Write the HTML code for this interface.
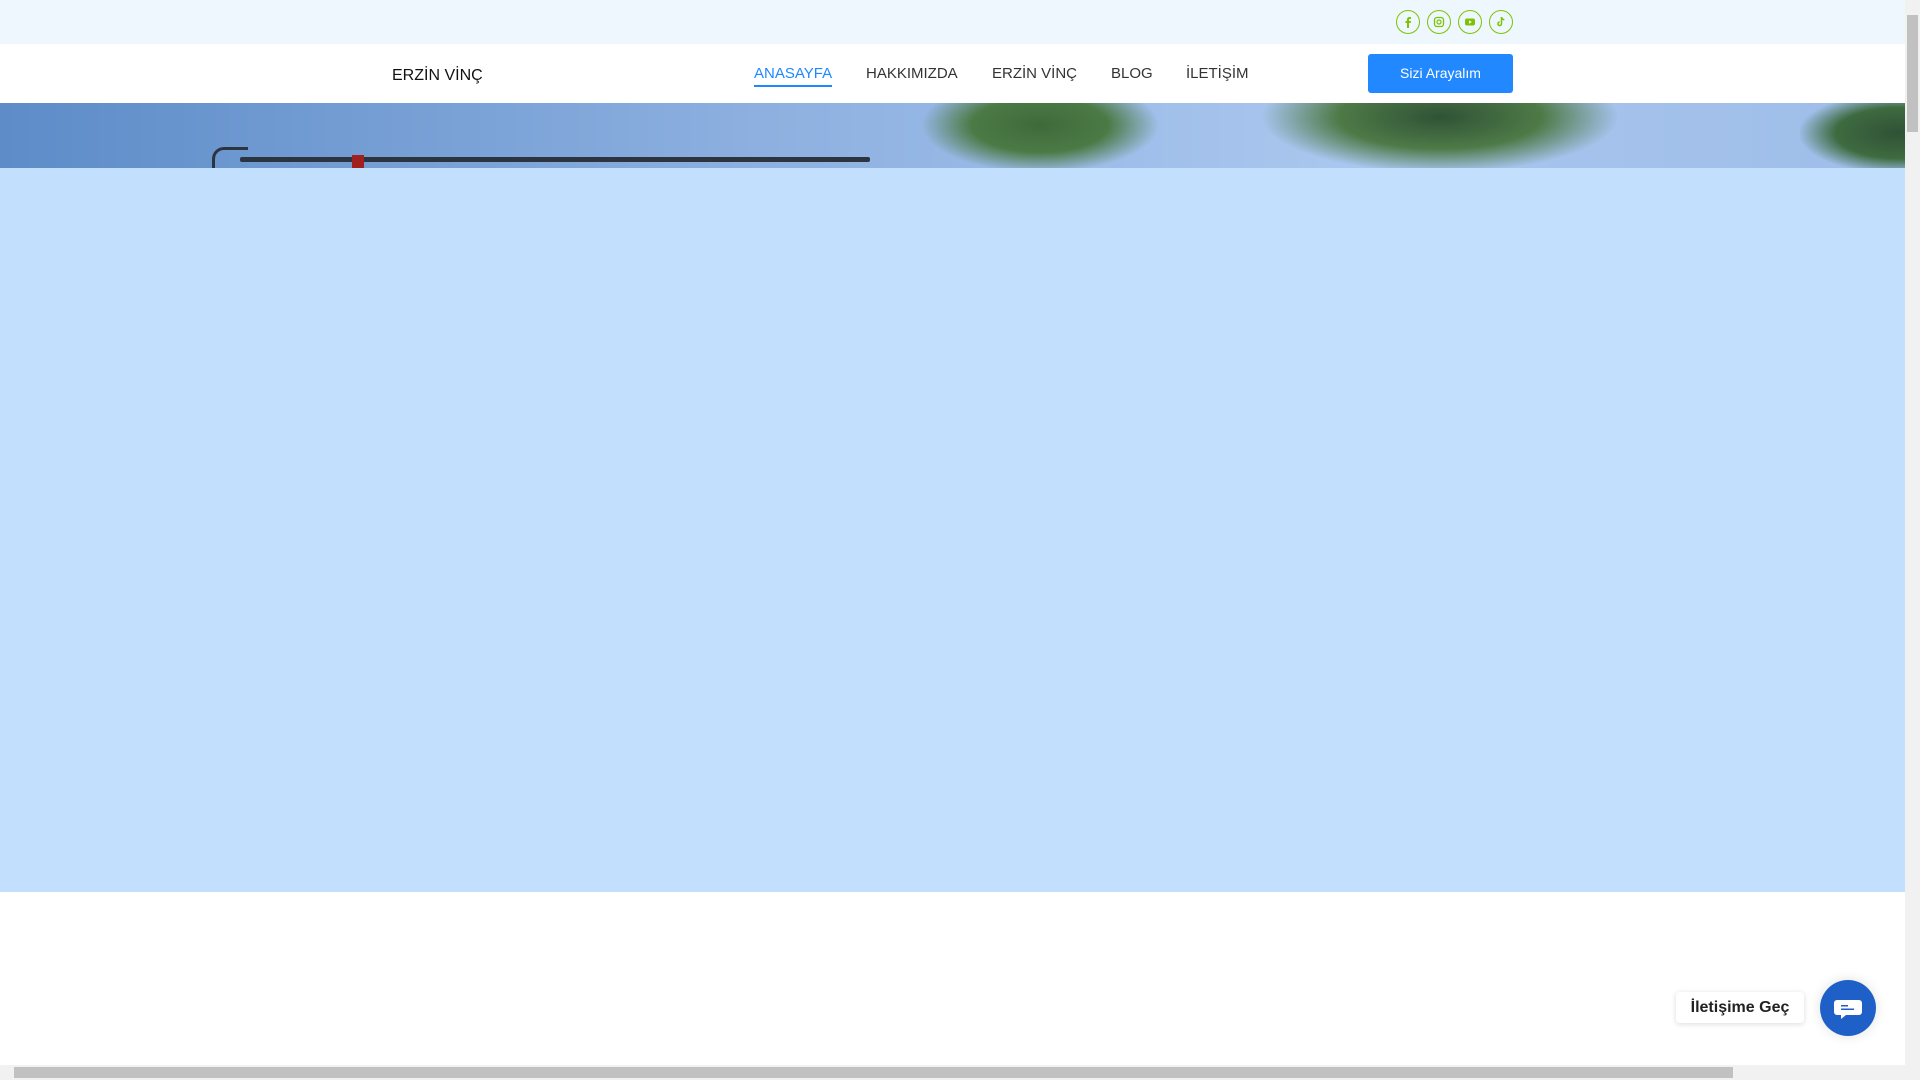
<!DOCTYPE html>
<html><head><meta charset="utf-8"><style>
*{margin:0;padding:0;box-sizing:border-box}
body{width:1920px;height:1080px;overflow:hidden;background:#fff;font-family:"Liberation Sans",Arial,sans-serif;position:relative}
.top{position:absolute;left:0;top:0;width:1905px;height:44px;background:#eef6fe}
.ic{position:absolute;top:10px;width:24px;height:24px;border:1px solid #7dc400;border-radius:50%;display:flex;align-items:center;justify-content:center}
.nav{position:absolute;top:44px;left:0;width:1905px;height:59px;background:#fff}
.logo{position:absolute;left:392px;top:67px;font-size:16px;color:#111}
.m{position:absolute;top:65px;font-size:15px;color:#333}
.btn{position:absolute;left:1368px;top:54px;width:145px;height:39px;background:#2288ff;border-radius:3px;color:#fff;font-size:14px;text-align:center;line-height:39px}
.photo{position:absolute;top:103px;left:0;width:1905px;height:65px;background:linear-gradient(90deg,#5d8cc8 0%,#8db0e0 40%,#a9c6ee 70%,#9ebde8 100%);overflow:hidden}
.hero{position:absolute;top:168px;left:0;width:1905px;height:724px;background:#c2e0fd}
.vs{position:absolute;right:0;top:0;width:15px;height:1080px;background:#f1f1f1}
.hs{position:absolute;left:0;bottom:0;width:1905px;height:15px;background:#f1f1f1}
</style></head><body>
<div class="top"></div>
<div class="ic" style="left:1396px"><svg width="12" height="12" viewBox="0 0 12 12"><path d="M7 12V7h1.7l.3-2H7V4c0-.6.2-1 1-1h1V1.2C8.6 1.1 8 1 7.5 1 6 1 5 2 5 3.6V5H3.5v2H5v5z" fill="#7dc400"/></svg></div>
<div class="ic" style="left:1427px"><svg width="12" height="12" viewBox="0 0 12 12"><rect x="1.5" y="1.5" width="9" height="9" rx="2.5" fill="none" stroke="#7dc400" stroke-width="1.3"/><circle cx="6" cy="6" r="2" fill="none" stroke="#7dc400" stroke-width="1.2"/></svg></div>
<div class="ic" style="left:1458px"><svg width="12" height="12" viewBox="0 0 12 12"><rect x="1" y="2.5" width="10" height="7" rx="2" fill="#7dc400"/><path d="M5 4.3v3.4L7.8 6z" fill="#fff"/></svg></div>
<div class="ic" style="left:1489px"><svg width="12" height="12" viewBox="0 0 12 12"><path d="M6.5 1v6.8a1.8 1.8 0 1 1-1.8-1.8" fill="none" stroke="#7dc400" stroke-width="1.5"/><path d="M6.5 1.2c.3 1.5 1.3 2.4 2.8 2.5" fill="none" stroke="#7dc400" stroke-width="1.5"/></svg></div>
<div class="nav"></div>
<div class="logo">ERZİN VİNÇ</div>
<div class="m" style="left:754px;color:#1e88ff">ANASAYFA</div>
<div style="position:absolute;left:754px;top:85px;width:78px;height:2px;background:#1e88ff"></div>
<div class="m" style="left:866px">HAKKIMIZDA</div>
<div class="m" style="left:992px">ERZİN VİNÇ</div>
<div class="m" style="left:1111px">BLOG</div>
<div class="m" style="left:1186px">İLETİŞİM</div>
<div class="btn">Sizi Arayalım</div>
<div class="photo">
<div style="position:absolute;left:240px;top:54px;width:630px;height:5px;background:#2c3440;border-radius:2px"></div>
<div style="position:absolute;left:212px;top:44px;width:36px;height:22px;border:3px solid #2c3440;border-radius:12px 0 0 0;border-right:none;border-bottom:none"></div>
<div style="position:absolute;left:352px;top:52px;width:12px;height:13px;background:#a02020"></div>
<div style="position:absolute;left:920px;top:-10px;width:240px;height:80px;background:radial-gradient(ellipse at 50% 40%,#3e6a3a 0%,#4c7a45 40%,rgba(80,120,70,0) 70%)"></div>
<div style="position:absolute;left:1260px;top:-10px;width:360px;height:80px;background:radial-gradient(ellipse at 50% 30%,#2f5236 0%,#4e7a47 40%,rgba(80,120,70,0) 70%)"></div>
<div style="position:absolute;left:1800px;top:-10px;width:140px;height:80px;background:radial-gradient(ellipse at 70% 50%,#2f5236 0%,#3f6b40 45%,rgba(80,120,70,0) 72%)"></div>
</div>
<div class="hero"></div>
<div style="position:absolute;left:1676px;top:992px;width:128px;height:31px;background:#fff;border-radius:4px;box-shadow:0 1px 6px rgba(0,0,0,.15);font-size:16px;font-weight:bold;color:#222;text-align:center;line-height:31px">İletişime Geç</div>
<div style="position:absolute;left:1820px;top:980px;width:56px;height:56px;border-radius:50%;background:#1f5fc8;box-shadow:0 0 12px rgba(0,0,0,.12)"><svg width="56" height="56" viewBox="0 0 56 56"><path d="M17 20h22a3 3 0 0 1 3 3v9a3 3 0 0 1-3 3H26l-5 4v-4h-4a3 3 0 0 1-3-3v-9a3 3 0 0 1 3-3z" fill="#fff"/><rect x="21" y="25" width="7" height="1.5" fill="#1f5fc8"/><rect x="21" y="28.5" width="13" height="1.5" fill="#1f5fc8"/></svg></div>
<div class="vs"><div style="position:absolute;left:2px;top:15px;width:11px;height:117px;background:#c1c1c1"></div></div>
<div class="hs"><div style="position:absolute;left:14px;top:2px;width:1719px;height:11px;background:#c1c1c1"></div></div>
</body></html>
